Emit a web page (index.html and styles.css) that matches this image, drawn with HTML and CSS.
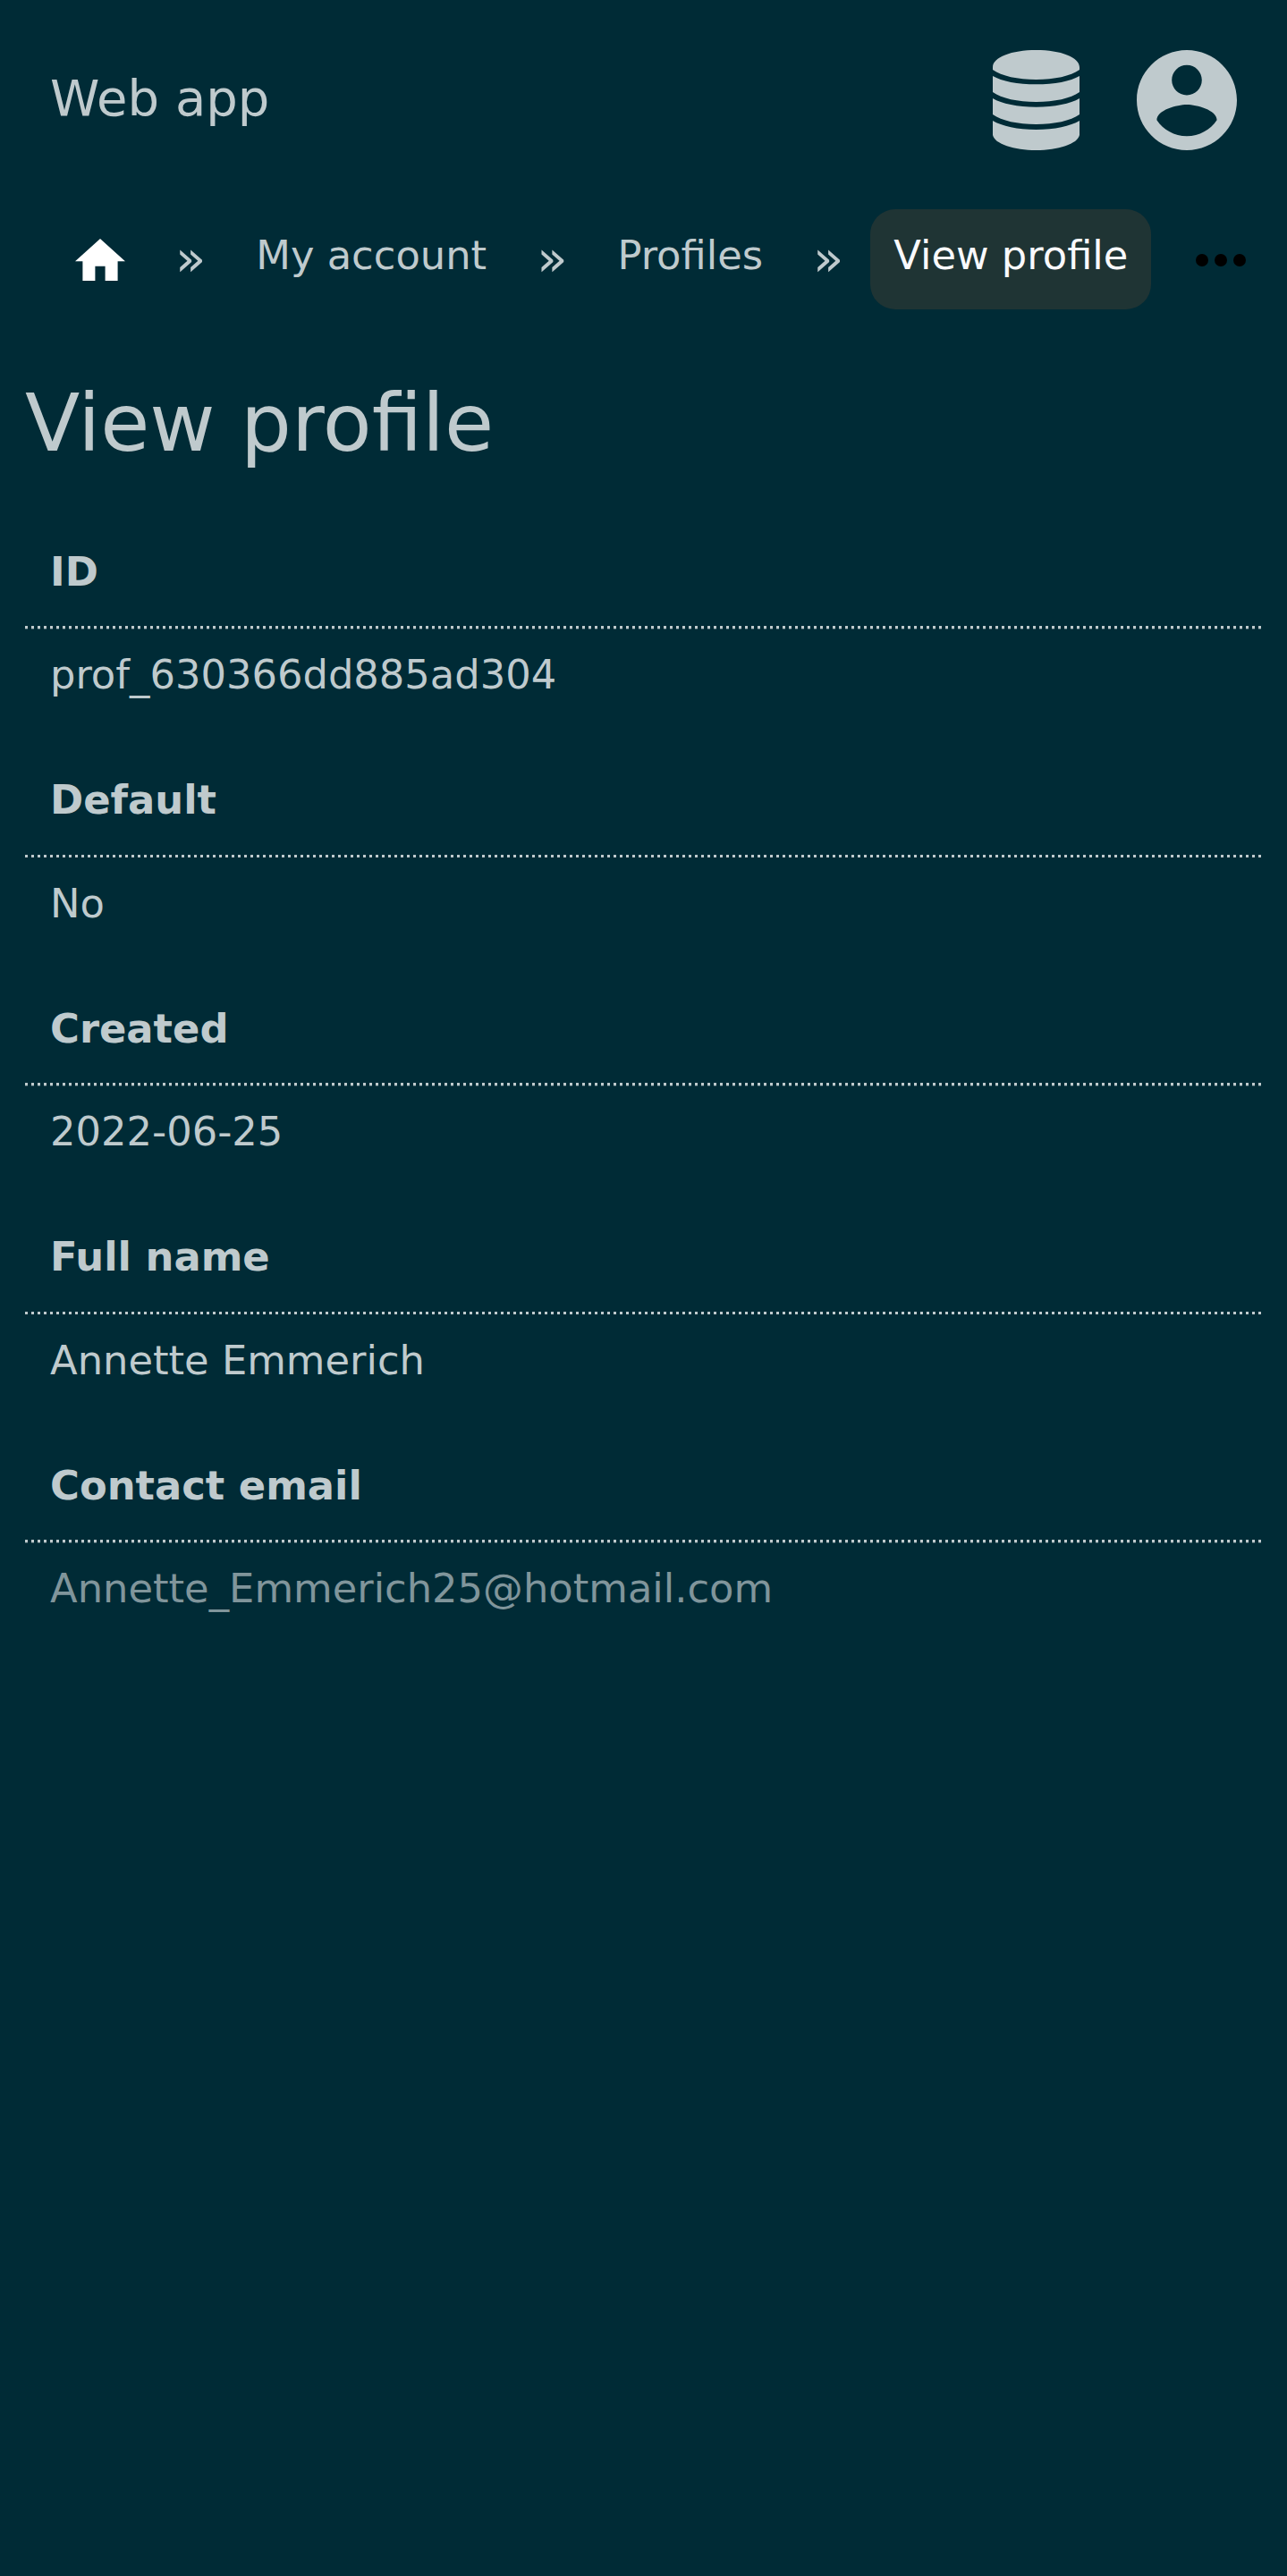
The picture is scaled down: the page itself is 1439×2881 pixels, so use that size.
FILE: index.html
```html
<!DOCTYPE html>
<html lang="en">
<head>
<meta charset="utf-8">
<title>View profile</title>
<link rel="stylesheet" href="styles.css">
</head>
<body>
<header class="topbar">
  <a class="brand">Web app</a>
  <nav class="tools">
    <svg class="db" viewBox="0 0 97 112" fill="currentColor"><path d="M0 19C0 8 21 0 48.5 0S97 8 97 19V22C87 29 69 33 48.5 33S10 29 0 22ZM0 29C10 35 28 38.3 48.5 38.3S87 35 97 29V47C87 54 69 58 48.5 58S10 54 0 47ZM0 54C10 60 28 63.7 48.5 63.7S87 60 97 54V72C87 79 69 83 48.5 83S10 79 0 72ZM0 79C10 85 28 89 48.5 89S87 85 97 79V95C95 105 73 112 48.5 112S2 105 0 95Z"/></svg>
    <svg class="user" viewBox="2 2 20 20" fill="currentColor"><path d="M12 2C6.48 2 2 6.48 2 12s4.48 10 10 10 10-4.48 10-10S17.52 2 12 2zm0 3c1.66 0 3 1.34 3 3s-1.34 3-3 3-3-1.34-3-3 1.34-3 3-3zm0 14.2c-2.5 0-4.71-1.28-6-3.22.03-1.99 4-3.08 6-3.08 1.99 0 5.97 1.09 6 3.08-1.29 1.94-3.5 3.22-6 3.22z"/></svg>
  </nav>
</header>
<nav class="crumbs">
  <a class="crumb home"><svg viewBox="2 3 20 17" fill="currentColor"><path d="M10 20v-6h4v6h5v-8h3L12 3 2 12h3v8z"/></svg></a>
  <span class="sep">»</span>
  <a class="crumb">My account</a>
  <span class="sep">»</span>
  <a class="crumb">Profiles</a>
  <span class="sep">»</span>
  <a class="crumb active">View profile</a>
  <svg class="more" viewBox="0 0 56 14"><circle cx="7" cy="7" r="7"/><circle cx="28" cy="7" r="7"/><circle cx="49" cy="7" r="7"/></svg>
</nav>
<main class="content">
  <h1 class="title">View profile</h1>
  <dl class="fields">
    <div class="field"><dt>ID</dt><dd>prof_630366dd885ad304</dd></div>
    <div class="field"><dt>Default</dt><dd>No</dd></div>
    <div class="field"><dt>Created</dt><dd>2022-06-25</dd></div>
    <div class="field"><dt>Full name</dt><dd>Annette Emmerich</dd></div>
    <div class="field"><dt>Contact email</dt><dd class="muted">Annette_Emmerich25@hotmail.com</dd></div>
  </dl>
</main>
</body>
</html>
```
FILE: styles.css
```css
* { box-sizing: border-box; }
body {
  margin: 0;
  min-height: 2881px;
  background: #002b36;
  color: #bfcacd;
  font: 44.8px/56px "DejaVu Sans", sans-serif;
}
svg { display: block; flex: none; }
.topbar {
  display: flex;
  justify-content: space-between;
  align-items: center;
  height: 224px;
  padding: 0 56px;
}
.brand { font-size: 56px; line-height: 66px; padding-bottom: 5px; }
.tools { display: flex; gap: 64px; }
.db { width: 97px; height: 112px; }
.user { width: 112px; height: 112px; }
.crumbs {
  display: flex;
  height: 132px;
  padding: 10px 46px 10px 56px;
  white-space: nowrap;
}
.crumb { height: 112px; padding: 23.5px 28px; border-radius: 28px; }
.home { width: 112px; padding-top: 32.5px; color: #fff; }
.home svg { width: 56px; height: 47.6px; }
.sep { padding: 27px 28px 0; font-size: 56px; line-height: 56px; }
.active { margin: 0 2px; padding: 23.5px 26px; background: #1f3434; color: #f9f9fc; }
.more { width: 56px; height: 14px; margin: 50px 0 0 auto; fill: #000; }
.content { padding: 63px 28px 0; }
.title { margin: 0; font-size: 89.6px; line-height: 108px; font-weight: 400; }
.fields { margin: 56.5px 0 0; }
.field { height: 255.5px; }
.field dt {
  height: 119.5px;
  padding: 28px 28px 0;
  font-weight: 700;
  background: repeating-linear-gradient(90deg, #bfcacd 0 3.5px, transparent 3.5px 7px) 0 100% / 100% 3px no-repeat;
}
.field dd { margin: 0; padding: 24px 28px 0; }
.field:nth-child(odd) dt {
  height: 120.5px;
  background:
    repeating-linear-gradient(90deg, #bfcacd 0 3.5px, transparent 3.5px 7px) 0 calc(100% - 1px) / 100% 3px no-repeat,
    repeating-linear-gradient(90deg, #bfcacd55 0 3.5px, transparent 3.5px 7px) 0 100% / 100% 1px no-repeat;
}
.field:nth-child(odd) dd { padding-top: 23px; }
.field .muted { color: #80959b; }
```
